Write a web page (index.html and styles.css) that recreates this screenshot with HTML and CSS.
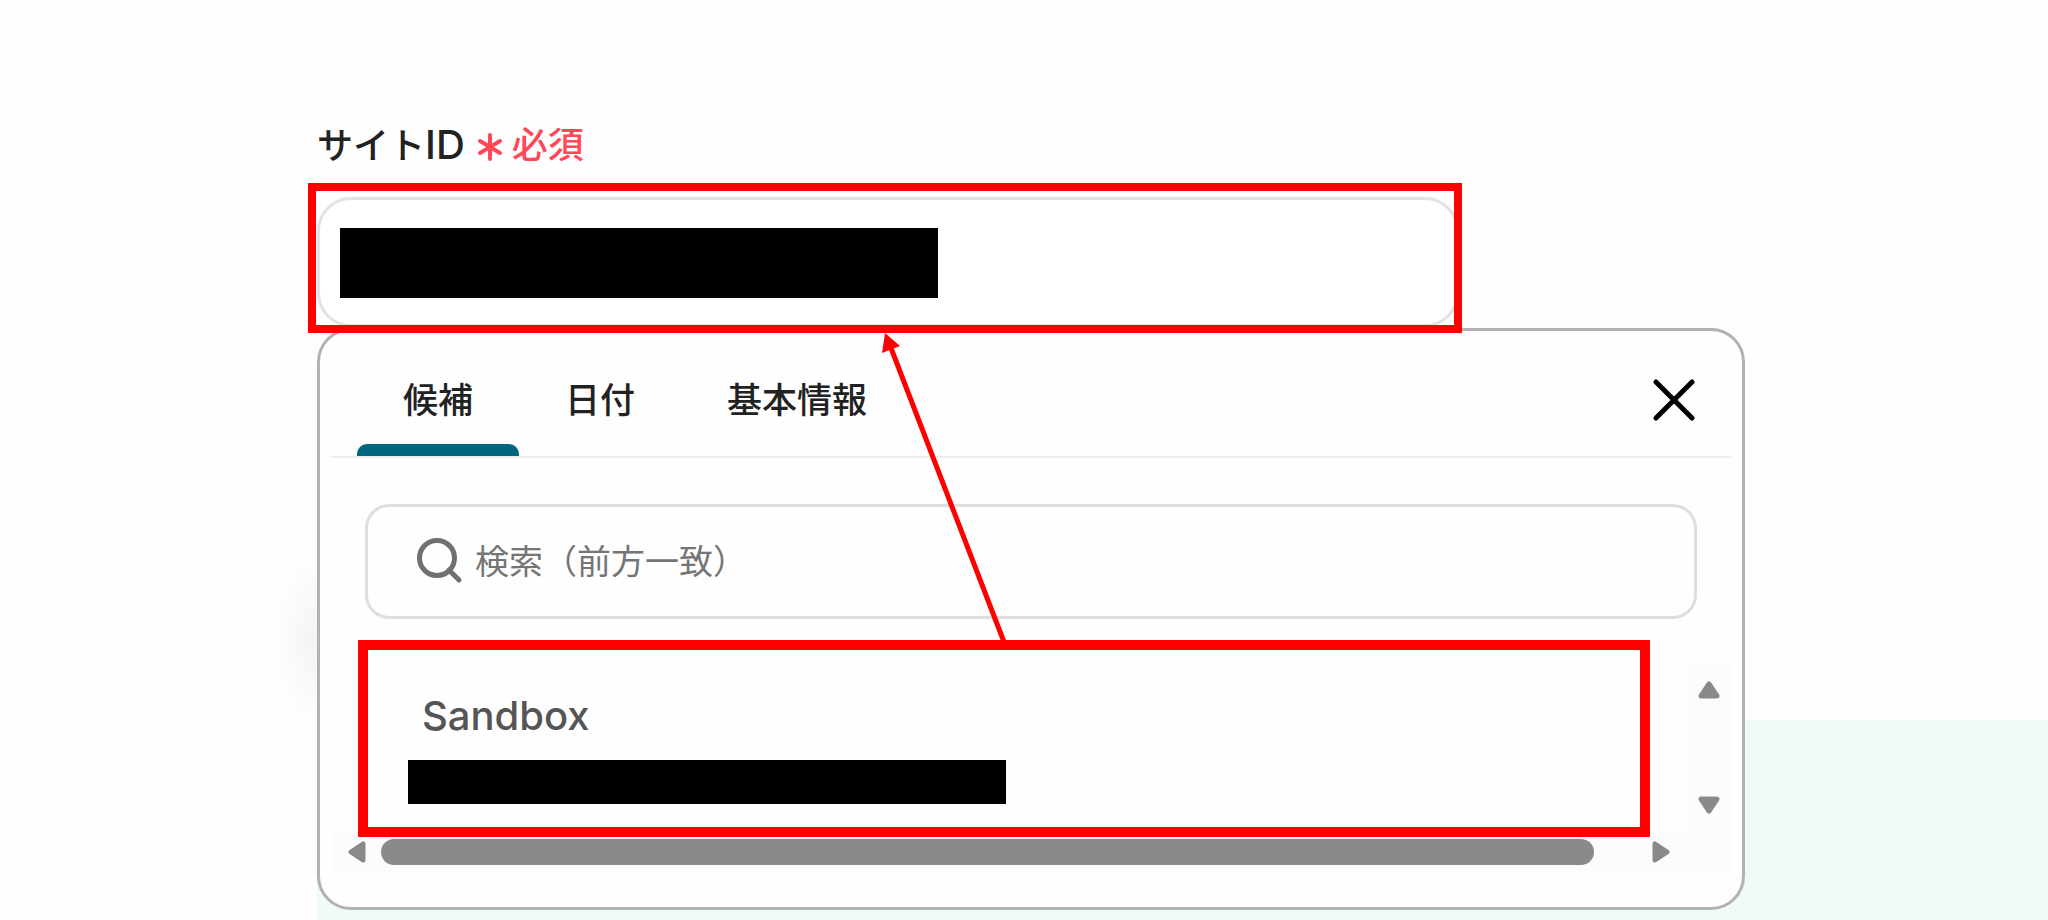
FILE: index.html
```html
<!DOCTYPE html>
<html lang="ja">
<head>
<meta charset="utf-8">
<title>サイトID</title>
<link rel="stylesheet" href="styles.css">
</head>
<body>
<main class="page">
  <div class="band"></div>
  <div class="glow"></div>

  <label class="label" for="site-id">
    <span class="label-text">サイト<span class="latin">ID</span></span>
    <span class="required">
      <svg class="asterisk" viewBox="0 0 26 28" aria-hidden="true"><path d="M13 2V26M3 8L23 20M23 8L3 20"/></svg>
      必須
    </span>
  </label>

  <div class="field">
    <input class="field-input" id="site-id" type="text">
    <span class="redaction redaction-field"></span>
    <span class="callout callout-field"></span>
  </div>

  <section class="panel">
    <header class="panel-head">
      <nav class="tabs" role="tablist">
        <button class="tab tab-active" role="tab" aria-selected="true">候補</button>
        <button class="tab" role="tab" aria-selected="false">日付</button>
        <button class="tab" role="tab" aria-selected="false">基本情報</button>
      </nav>
      <button class="close" aria-label="閉じる">
        <svg width="42" height="42" viewBox="0 0 42 42"><path d="M3 3L39 39M39 3L3 39"/></svg>
      </button>
    </header>

    <label class="search">
      <svg class="search-icon" width="48" height="48" viewBox="0 0 48 48" aria-hidden="true"><circle cx="21" cy="20" r="17.5"/><path d="M33 32L43 42"/></svg>
      <input class="search-input" type="text" placeholder="検索（前方一致）" aria-label="検索">
    </label>

    <div class="list">
      <div class="viewport">
        <button class="option">
          <span class="option-name">Sandbox</span>
          <span class="redaction redaction-option"></span>
        </button>
        <span class="callout callout-option"></span>
      </div>
      <div class="scroll-y">
        <button class="step" aria-label="上へ"><svg width="22" height="18" viewBox="0 0 22 18"><path d="M11 3L19 15H3Z"/></svg></button>
        <button class="step" aria-label="下へ"><svg width="22" height="18" viewBox="0 0 22 18"><path d="M11 15L19 3H3Z"/></svg></button>
      </div>
      <div class="scroll-x">
        <button class="step" aria-label="左へ"><svg width="18" height="22" viewBox="0 0 18 22"><path d="M3 11L15 3V19Z"/></svg></button>
        <span class="thumb"></span>
        <button class="step" aria-label="右へ"><svg width="18" height="22" viewBox="0 0 18 22"><path d="M15 11L3 3V19Z"/></svg></button>
      </div>
    </div>

    <svg class="arrow" width="130" height="312" viewBox="0 0 130 312" aria-hidden="true">
      <path class="arrow-line" d="M11 17L124 311"/>
      <path class="arrow-head" d="M5 2L20 15L2 22Z"/>
    </svg>
  </section>
</main>
</body>
</html>
```
FILE: styles.css
```css
* {
  box-sizing: border-box;
}

body {
  margin: 0;
  background: #fefefe;
  color: #222;
  font-family: Inter, "Noto Sans CJK JP", sans-serif;
}

button,
input {
  font: inherit;
  color: inherit;
  border: 0;
  padding: 0;
  background: none;
}

svg {
  display: block;
}

.page {
  position: relative;
  min-height: 100vh;
  padding: 117px 303px 8px 317px;
}

.band {
  position: absolute;
  left: 317px;
  right: 0;
  bottom: 0;
  height: 200px;
  background: #f0faf9;
}

.glow {
  position: absolute;
  left: 272px;
  top: 550px;
  width: 90px;
  height: 180px;
  background: radial-gradient(closest-side, #f2f4f3, #fefefe);
}

.label {
  display: flex;
  align-items: center;
  gap: 12px;
  height: 56px;
  font-size: 36px;
  line-height: 56px;
  font-weight: 500;
}

.latin {
  font-size: 40px;
}

.required {
  display: flex;
  align-items: center;
  gap: 9px;
  color: #ff4757;
}

.asterisk {
  width: 26px;
  height: 28px;
  margin-top: 4px;
  fill: none;
  stroke: #ff4757;
  stroke-width: 4;
  stroke-linecap: round;
}

.field {
  position: relative;
  z-index: 2;
  width: 80%;
  margin-top: 24px;
}

.field-input {
  display: block;
  width: 100%;
  height: 130px;
  padding: 0 24px;
  border: 3px solid #e2e2e2;
  border-radius: 34px;
  background: #fff;
  font-size: 36px;
}

.redaction {
  display: block;
  width: 598px;
  background: #000;
}

.redaction-field {
  position: absolute;
  left: 23px;
  top: 31px;
  height: 70px;
}

.callout {
  position: absolute;
  border: 8px solid #f00;
  pointer-events: none;
}

.callout-field {
  inset: -14px -3px -6px -9px;
}

.panel {
  position: relative;
  z-index: 1;
  margin-top: 1px;
  padding: 0 11px 33px;
  border: 3px solid #b2b2b2;
  border-radius: 34px;
  background: #fefefe;
}

.panel-head {
  display: flex;
  align-items: stretch;
  justify-content: space-between;
  height: 127px;
  padding: 0 36px 0 26px;
  border-bottom: 2px solid #eee;
}

.tabs {
  display: flex;
}

.tab {
  position: relative;
  padding: 8px 46px 0;
  font-size: 35px;
  font-weight: 500;
}

.tab-active::after {
  content: "";
  position: absolute;
  left: 0;
  right: 0;
  bottom: 0;
  height: 12px;
  border-radius: 10px 10px 0 0;
  background: #00677f;
}

.close {
  padding-top: 12px;
}

.close svg {
  fill: none;
  stroke: #000;
  stroke-width: 5;
  stroke-linecap: round;
}

.search {
  display: flex;
  align-items: center;
  gap: 11px;
  height: 115px;
  margin: 46px 34px 45px;
  padding: 0 48px;
  border: 3px solid #dedede;
  border-radius: 24px;
}

.search-icon {
  fill: none;
  stroke: #707070;
  stroke-width: 5;
  stroke-linecap: round;
}

.search-input {
  flex: 1;
  min-width: 0;
  font-size: 34px;
  outline: 0;
}

.search-input::placeholder {
  color: #757575;
  opacity: 1;
}

.list {
  display: grid;
  grid-template-columns: 1fr 44px;
  grid-template-rows: 166px 44px;
}

.viewport {
  position: relative;
}

.option {
  display: block;
  width: 100%;
  padding: 28px 0 0 77px;
  text-align: left;
}

.option-name {
  display: block;
  padding-left: 14px;
  color: #555;
  font-size: 40px;
  line-height: 48px;
  font-weight: 500;
}

.redaction-option {
  height: 44px;
  margin-top: 20px;
}

.callout-option {
  z-index: 1;
  inset: -24px 37px -7px 27px;
  border-width: 10px;
}

.scroll-y {
  display: flex;
  flex-direction: column;
  justify-content: space-between;
  align-items: center;
  padding: 17px 0 16px;
  background: #fcfcfc;
}

.scroll-x {
  grid-column: 1 / -1;
  display: flex;
  align-items: center;
  padding: 0 61px 0 17px;
  background: #fcfcfc;
}

.thumb {
  flex: 1;
  height: 26px;
  margin: 0 58px 0 15px;
  border-radius: 13px;
  background: #8a8a8a;
}

.step svg {
  fill: #8a8a8a;
  stroke: #8a8a8a;
  stroke-width: 5;
  stroke-linejoin: round;
}

.arrow {
  position: absolute;
  left: 560px;
  top: 0;
}

.arrow-line {
  fill: none;
  stroke: #f00;
  stroke-width: 5;
}

.arrow-head {
  fill: #f00;
}
```
